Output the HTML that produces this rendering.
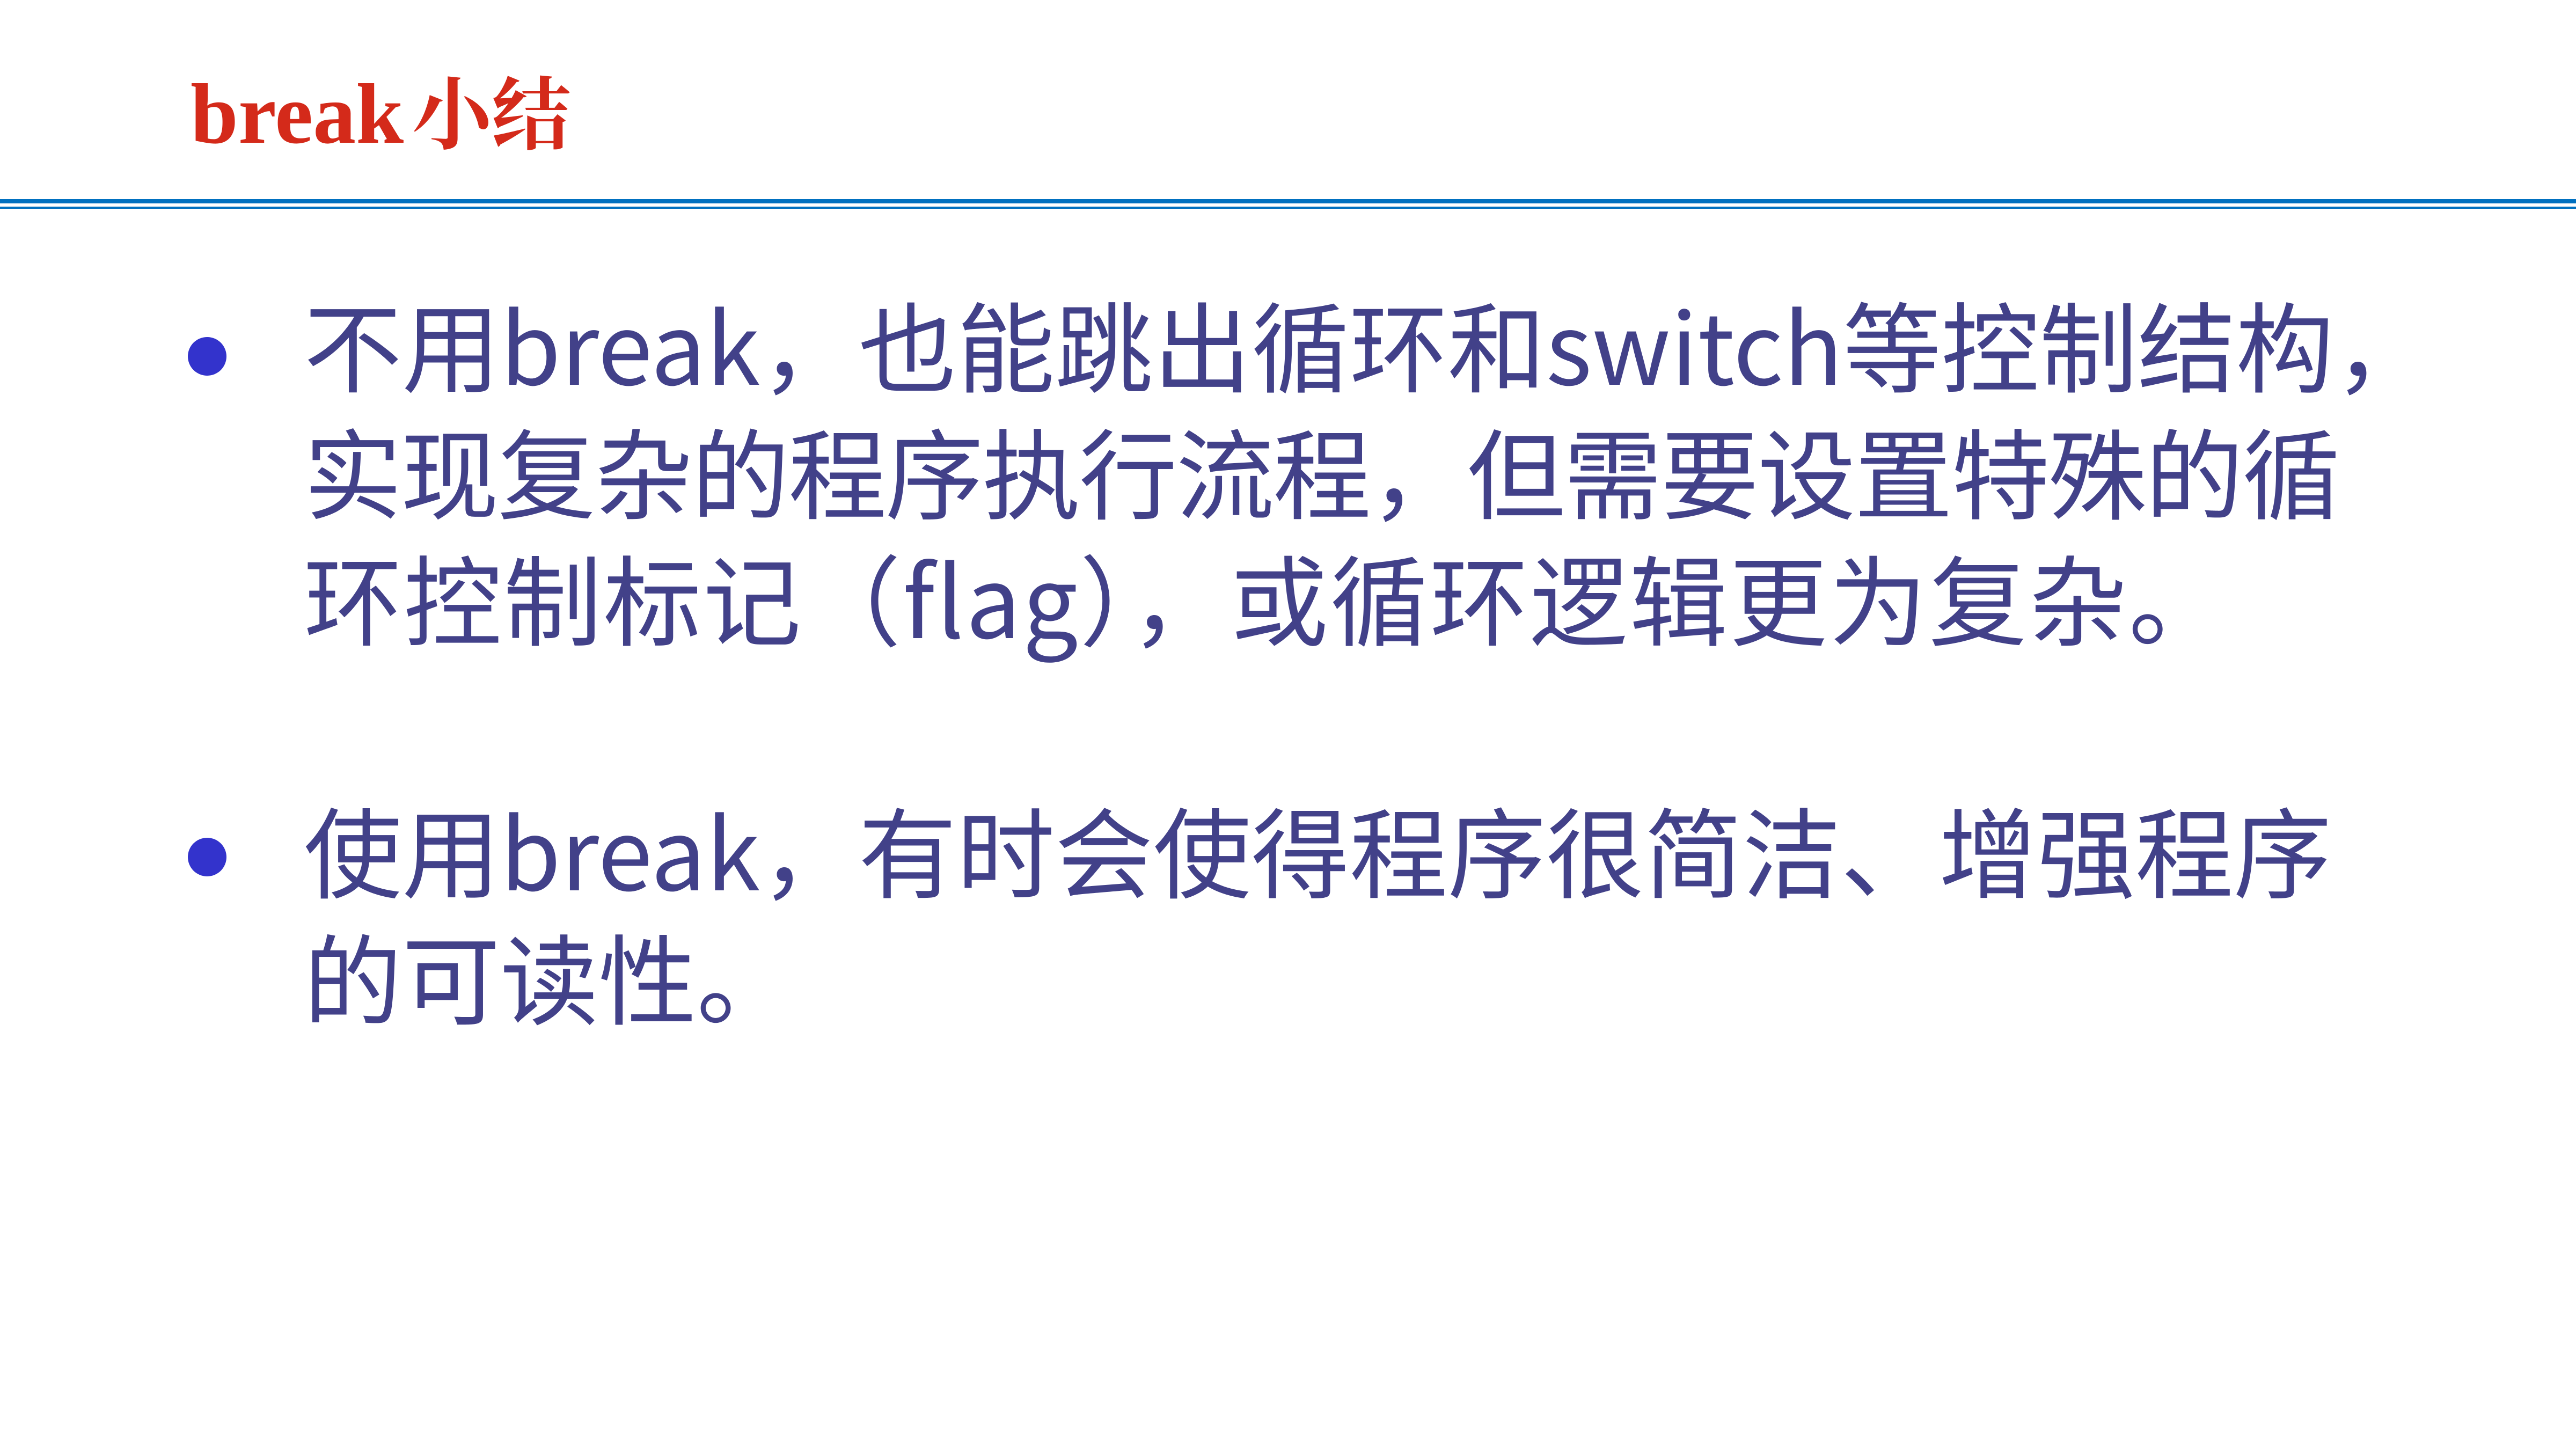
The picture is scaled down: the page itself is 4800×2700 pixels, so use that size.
<!DOCTYPE html>
<html><head><meta charset="utf-8"><style>
html,body{margin:0;padding:0;}
body{width:4800px;height:2700px;background:#fff;position:relative;overflow:hidden;}
.title{position:absolute;left:355px;top:112px;height:200px;white-space:nowrap;color:#d42a1a;}
.t1{font-family:"Liberation Serif",serif;font-weight:bold;font-size:160px;line-height:200px;display:inline-block;}
.t2{font-family:"Liberation Serif","Noto Serif CJK SC",serif;font-weight:bold;font-size:148px;line-height:200px;display:inline-block;margin-left:16px;}
.l1{position:absolute;left:0;top:371px;width:4800px;height:8px;background:#0070c0;}
.l2{position:absolute;left:0;top:385px;width:4800px;height:4px;background:#0070c0;}
.p{position:absolute;left:566px;font-family:"Noto Sans CJK SC","WenQuanYi Zen Hei",sans-serif;font-size:183px;line-height:236px;color:#424189;white-space:nowrap;}
.b{position:absolute;width:72px;height:72px;border-radius:50%;background:#3333cc;left:350px;}
</style></head><body>
<div class="title"><span class="t1">break</span><span class="t2">小结</span></div>
<div class="l1"></div><div class="l2"></div>
<div class="b" style="top:628px"></div>
<div class="p" style="top:520px">不用break，也能跳出循环和switch等控制结构，<br><span style="letter-spacing:-2.4px">实现复杂的程序执行流程，但需要设置特殊的循</span><br><span style="letter-spacing:3px">环控制标记（flag），或循环逻辑更为复杂。</span></div>
<div class="b" style="top:1561px"></div>
<div class="p" style="top:1462px">使用break，有时会使得程序很简洁、增强程序<br>的可读性。</div>
</body></html>
